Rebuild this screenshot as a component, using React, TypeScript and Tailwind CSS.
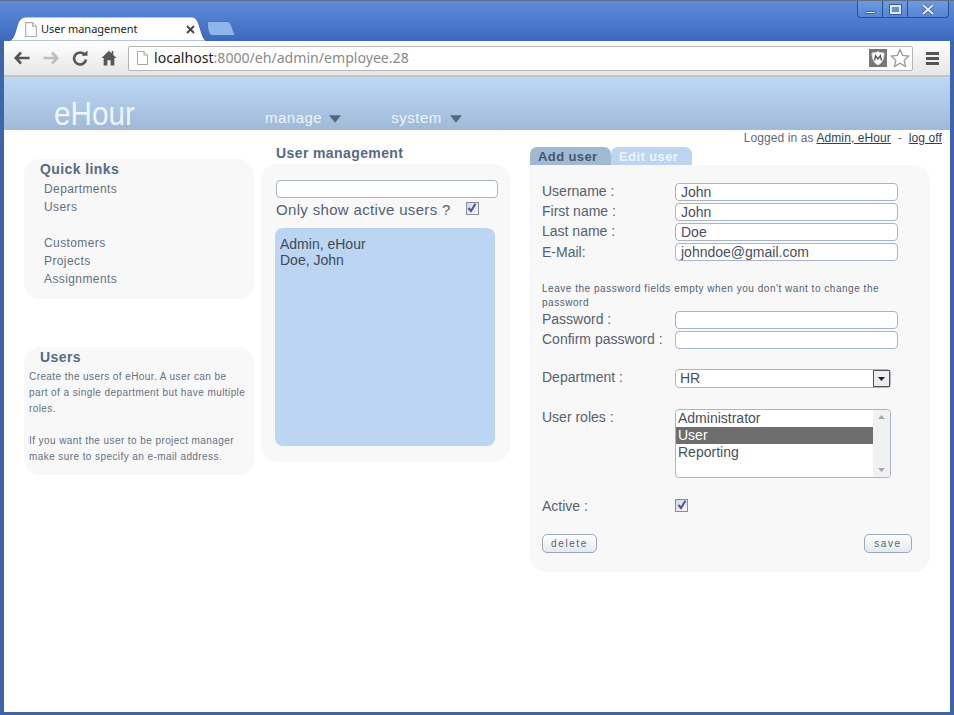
import React from "react";

const sans = "font-['Liberation_Sans',Arial,sans-serif]";

function Check() {
  return (
    <span className="flex h-[13px] w-[13px] items-center justify-center border border-[#868d9c] bg-gradient-to-br from-[#d5d8e0] to-[#f8f8fb]">
      <svg width="10" height="10" viewBox="0 0 10 10">
        <path d="M1.5 5 L4 8 L8.5 0.8" fill="none" stroke="#46569c" strokeWidth="2" />
      </svg>
    </span>
  );
}

function Field({ label, value, labelClass }: { label: string; value?: string; labelClass?: string }) {
  return (
    <div className="flex h-[20px] items-start">
      <span className={"w-[133px] text-[14px] leading-[16px] text-[#56616f] " + (labelClass ?? "mt-[2px]")}>{label}</span>
      <span className="mt-[2px] flex h-[18px] w-[223px] items-center rounded-[4px] border border-[#a9b4c6] bg-white pl-[5px] text-[14px] text-[#46505c]">
        {value}
      </span>
    </div>
  );
}

function Btn({ children, className }: { children: string; className: string }) {
  return (
    <span className={"flex h-[19px] items-center justify-center rounded-[5px] border border-[#9aa8bd] bg-gradient-to-b from-white to-[#e4e8ef] text-[10px] tracking-[1.6px] text-[#5b6470] " + className}>
      {children}
    </span>
  );
}

function DocIcon({ size = 16 }: { size?: number }) {
  return (
    <svg width={size} height={size} viewBox="0 0 16 16" className="shrink-0">
      <path d="M3.5 1.5 H10 L13.5 5 V14.5 H3.5 Z" fill="#fff" stroke="#a8a8a8" />
      <path d="M10 1.5 V5 H13.5" fill="#eee" stroke="#a8a8a8" />
    </svg>
  );
}

function Arrow({ flip, color }: { flip?: boolean; color: string }) {
  return (
    <svg width="16" height="14" viewBox="0 0 16 14" className={flip ? "-scale-x-100" : ""}>
      <path d="M7 1.5 L1.8 7 L7 12.5 M2.5 7 H15.5" fill="none" stroke={color} strokeWidth="2.6" />
    </svg>
  );
}

export default function App() {
  return (
    <div className={"flex h-[715px] w-[954px] flex-col overflow-hidden border-t border-t-[#5f6f88] bg-[#3f64a8] " + sans}>
      {/* Title bar */}
      <div className="relative flex h-[40px] shrink-0 items-end bg-gradient-to-b from-[#5f8ddb] to-[#3d69bd] pl-[8px]">
        <div className="relative flex h-[24px] w-[199px] items-center pl-[14px]">
          <svg className="absolute inset-0" width="199" height="24" viewBox="0 0 199 24">
            <path d="M0 24 C4 24 6 20 8 13 C10 5 12 0 18 0 H184 C188 0 190 4 192 11 C194 18 196 24 199 24 Z" fill="#fff" stroke="#2f55a0" strokeWidth="0.7" />
          </svg>
          <span className="relative"><DocIcon size={17} /></span>
          <span className="relative ml-[2px] font-['Noto_Sans',sans-serif] text-[11px] text-[#222]">User management</span>
          <svg className="absolute left-[178px] top-[8px]" width="9" height="9" viewBox="0 0 9 9">
            <path d="M1 1 L8 8 M8 1 L1 8" stroke="#444" strokeWidth="1.8" />
          </svg>
        </div>
        <svg className="mb-[5px] ml-[-3px]" width="33" height="15" viewBox="0 0 33 15">
          <path d="M3 0.5 H23 C26 0.5 27 3 28 6 L31 14.5 H8 C6 14.5 5 12 4 9 Z" fill="#8fb5ea" stroke="#4a72c0" />
        </svg>
        <div className="absolute right-[5px] top-0 flex h-[17px] w-[92px] rounded-b-[4px] border border-t-0 border-[#2c4f93] bg-gradient-to-b from-[#6d99df] to-[#5885d2]">
          <span className="flex w-[25px] items-end justify-center border-r border-[#2c4f93] pb-[3px]">
            <span className="h-[3px] w-[11px] rounded-[1px] border border-[#3e5f9c] bg-[#dfe8f6]" />
          </span>
          <span className="flex w-[25px] items-center justify-center border-r border-[#2c4f93]">
            <span className="flex h-[9px] w-[11px] items-center justify-center border-2 border-[#dfe8f6] outline outline-1 outline-[#3e5f9c]" />
          </span>
          <span className="flex flex-1 items-center justify-center">
            <svg width="14" height="11" viewBox="0 0 14 11">
              <path d="M2 1 L12 10 M12 1 L2 10" stroke="#3e5f9c" strokeWidth="3.6" />
              <path d="M2 1 L12 10 M12 1 L2 10" stroke="#e8eef8" strokeWidth="2" />
            </svg>
          </span>
        </div>
      </div>

      {/* Window body */}
      <div className="mx-[4px] mb-[3px] flex min-h-0 flex-1 flex-col bg-white">
        {/* Toolbar */}
        <div className="flex h-[36px] shrink-0 items-center border-b-2 border-b-[#c4c4c4] bg-gradient-to-b from-white to-[#e6e6e6] pl-[10px]">
          <Arrow color="#555" />
          <span className="ml-[13px]"><Arrow flip color="#bdbdbd" /></span>
          <svg className="ml-[13px]" width="16" height="16" viewBox="0 0 16 16">
            <path d="M13 5 A6 6 0 1 0 14 9.5" fill="none" stroke="#555" strokeWidth="2.6" />
            <path d="M9.5 5.8 H15.5 V0.5 Z" fill="#555" />
          </svg>
          <svg className="ml-[13px]" width="16" height="16" viewBox="0 0 15 15">
            <path d="M7.5 0.8 L0.5 7.5 H2.5 V14.5 H6 V9.5 H9 V14.5 H12.5 V7.5 H14.5 L11.5 4.6 V1 H10 V3.2 Z" fill="#585858" />
          </svg>
          <div className="ml-[11px] flex h-[25px] w-[785px] items-center rounded-[2px] border border-[#b5b5b5] bg-white pl-[5px]">
            <DocIcon />
            <span className="ml-[4px] font-['Noto_Sans',sans-serif] text-[14.1px] text-[#8a8a8a]">
              <span className="text-[#222]">localhost</span>:8000/eh/admin/employee.28
            </span>
            <span className="ml-auto flex h-[18px] w-[18px] items-center justify-center bg-[#777]">
              <svg width="14" height="15" viewBox="0 0 14 15">
                <path d="M1 2 C4 2 5 1.5 7 0.8 C9 1.5 10 2 13 2 C13 8 11 12 7 14 C3 12 1 8 1 2 Z" fill="#fff" stroke="#ddd" />
                <path d="M3.5 9.5 L4.6 4.5 L7 8 L9.4 4.5 L10.5 9.5" fill="none" stroke="#555" strokeWidth="1.3" />
              </svg>
            </span>
            <svg className="ml-[3px] mr-[2px]" width="20" height="20" viewBox="0 0 20 20">
              <path d="M10 1.5 L12.6 7.3 L18.8 8 L14.2 12.2 L15.5 18.4 L10 15.2 L4.5 18.4 L5.8 12.2 L1.2 8 L7.4 7.3 Z" fill="#fff" stroke="#9a9a9a" strokeWidth="1.3" />
            </svg>
          </div>
          <span className="ml-[13px] flex w-[13px] flex-col gap-[2px]">
            <span className="h-[3px] bg-[#555]" />
            <span className="h-[3px] bg-[#555]" />
            <span className="h-[3px] bg-[#555]" />
          </span>
        </div>

        {/* App header */}
        <div className="flex h-[53px] shrink-0 items-end bg-gradient-to-b from-[#bdd8f5] to-[#a0b9d6]">
          <span className="ml-[50px] w-[211px] origin-left scale-x-[0.9] text-[33px] leading-[33px] text-[#eef4fb]">eHour</span>
          <span className="mb-[4px] flex items-center text-[15px] leading-[17px] tracking-[0.5px] text-[#eef4fb]">
            manage
            <svg className="ml-[7px] mt-[3px]" width="12" height="8" viewBox="0 0 13 8"><path d="M0 0 H13 L6.5 8 Z" fill="#566679" /></svg>
          </span>
          <span className="mb-[4px] ml-[50px] flex items-center text-[15px] leading-[17px] tracking-[0.5px] text-[#eef4fb]">
            system
            <svg className="ml-[8px] mt-[3px]" width="12" height="8" viewBox="0 0 13 8"><path d="M0 0 H13 L6.5 8 Z" fill="#566679" /></svg>
          </span>
        </div>

        {/* Logged in */}
        <div className="flex h-[17px] shrink-0 items-end justify-end pb-[1px] pr-[8px] text-[12px] leading-[15px] tracking-[0.1px] text-[#5f6a78]">
          <span>Logged in as <span className="text-[#33404f] underline">Admin, eHour</span>&nbsp; - &nbsp;<span className="text-[#33404f] underline">log off</span></span>
        </div>

        {/* Columns */}
        <div className="flex items-start pl-[20px]">
          {/* Left */}
          <div className="mt-[12px] w-[230px]">
            <div className="h-[140px] rounded-[16px] bg-[#f8f8f9] pt-[2px]">
              <div className="pl-[16px] text-[14px] font-bold leading-[16px] tracking-[0.4px] text-[#566a84]">Quick links</div>
              <div className="mt-[3px] pl-[20px] text-[12px] leading-[18px] tracking-[0.4px] text-[#647080]">
                <div>Departments</div>
                <div>Users</div>
                <div className="h-[18px]" />
                <div>Customers</div>
                <div>Projects</div>
                <div>Assignments</div>
              </div>
            </div>
            <div className="mt-[48px] h-[128px] rounded-[16px] bg-[#f8f8f9] pt-[2px]">
              <div className="pl-[16px] text-[14px] font-bold leading-[16px] tracking-[0.4px] text-[#566a84]">Users</div>
              <div className="mt-[4px] pl-[5px] text-[10px] leading-[16px] tracking-[0.42px] text-[#647080]">
                Create the users of eHour. A user can be<br />
                part of a single department but have multiple<br />
                roles.<br /><br />
                If you want the user to be project manager<br />
                make sure to specify an e-mail address.
              </div>
            </div>
          </div>

          {/* Middle */}
          <div className="ml-[7px] w-[249px]">
            <div className="h-[17px] pl-[15px] text-[14px] font-bold leading-[12px] tracking-[0.4px] text-[#566a84]">User management</div>
            <div className="h-[298px] rounded-[16px] bg-[#f8f8f9] pl-[14px] pt-[16px]">
              <div className="ml-[1px] h-[18px] w-[222px] rounded-[4px] border border-[#a9b4c6] bg-white" />
              <div className="mt-[3px] flex h-[18px] items-center pl-[1px] text-[15px] tracking-[0.33px] text-[#56616f]">
                Only show active users ?
                <span className="mb-[4px] ml-[15px]"><Check /></span>
              </div>
              <div className="mt-[9px] h-[218px] w-[220px] rounded-[8px] bg-[#bbd5f2] pl-[5px] pt-[8px] text-[14px] leading-[16px] text-[#3f4a58]">
                <div>Admin, eHour</div>
                <div>Doe, John</div>
              </div>
            </div>
          </div>

          {/* Right */}
          <div className="ml-[20px] w-[400px]">
            <div className="flex h-[18px] items-end">
              <span className="h-[18px] w-[81px] rounded-t-[7px] bg-[#a0bad6] pl-[8px] text-[13px] font-bold leading-[19px] tracking-[0.4px] text-[#46576e]">Add user</span>
              <span className="h-[18px] w-[81px] rounded-t-[7px] bg-[#bbd5f2] pl-[8px] text-[13px] font-bold leading-[19px] tracking-[0.4px] text-[#edf4fc]">Edit user</span>
            </div>
            <div className="h-[407px] rounded-b-[16px] rounded-tr-[16px] bg-[#f8f8f9] pl-[12px] pt-[16px]">
              <Field label="Username :" value="John" />
              <Field label="First name :" value="John" />
              <Field label="Last name :" value="Doe" />
              <Field label="E-Mail:" value="johndoe@gmail.com" labelClass="mt-[3px]" />
              <div className="mt-[21px] w-[350px] text-[10px] leading-[14px] tracking-[0.53px] text-[#56616f]">
                Leave the password fields empty when you don't want to change the password
              </div>
              <div className="mt-[-1px]">
                <Field label="Password :" />
                <Field label="Confirm password :" />
              </div>
              <div className="mt-[19px] flex h-[21px] items-start">
                <span className="mt-[1px] w-[133px] text-[14px] leading-[16px] text-[#56616f]">Department :</span>
                <span className="mt-[1px] flex h-[19px] w-[216px] items-center justify-between rounded-[4px] border border-[#a9b4c6] bg-white pl-[4px] text-[14px] text-[#46505c]">
                  HR
                  <span className="flex h-[17px] w-[17px] items-center justify-center border border-[#555] bg-[#ececec]">
                    <svg width="7" height="4" viewBox="0 0 7 4"><path d="M0 0 H7 L3.5 4 Z" fill="#222" /></svg>
                  </span>
                </span>
              </div>
              <div className="mt-[20px] flex h-[70px] items-start">
                <span className="w-[133px] text-[14px] leading-[16px] text-[#56616f]">User roles :</span>
                <div className="flex h-[69px] w-[216px] rounded-[4px] border border-[#a9b4c6] bg-white text-[14px] leading-[17px] text-[#46505c]">
                  <div className="flex-1">
                    <div className="pl-[2px]">Administrator</div>
                    <div className="bg-[#6e6e6e] pl-[2px] text-white">User</div>
                    <div className="pl-[2px]">Reporting</div>
                  </div>
                  <div className="flex w-[17px] flex-col items-center justify-between rounded-r-[4px] bg-[#f1f1f1] py-[5px]">
                    <svg width="7" height="4" viewBox="0 0 7 4"><path d="M0 4 H7 L3.5 0 Z" fill="#a8a8a8" /></svg>
                    <svg width="7" height="4" viewBox="0 0 7 4"><path d="M0 0 H7 L3.5 4 Z" fill="#a8a8a8" /></svg>
                  </div>
                </div>
              </div>
              <div className="mt-[19px] flex h-[16px] items-center">
                <span className="w-[133px] text-[14px] text-[#56616f]">Active :</span>
                <span className="mb-[2px]"><Check /></span>
              </div>
              <div className="mt-[20px] flex w-[370px] justify-between">
                <Btn className="w-[55px]">delete</Btn>
                <Btn className="w-[48px]">save</Btn>
              </div>
            </div>
          </div>
        </div>
      </div>
    </div>
  );
}
